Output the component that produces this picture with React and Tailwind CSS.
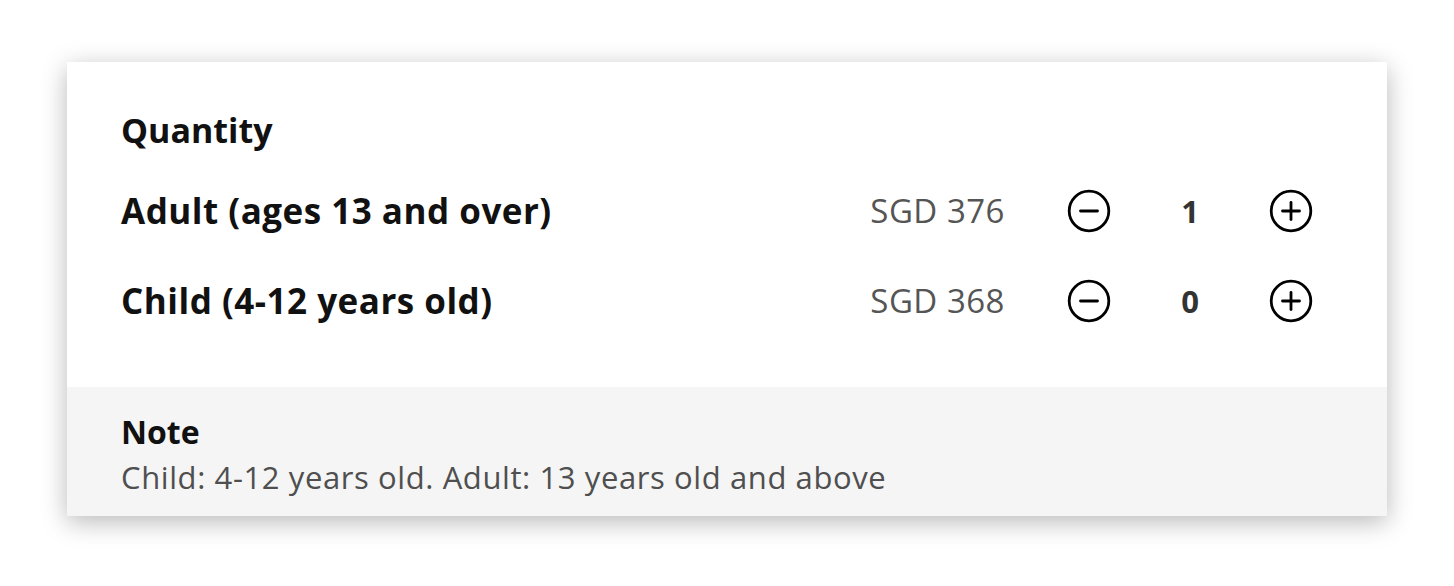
import { useState } from 'react';

const font = { fontFamily: '"Open Sans", "Noto Sans", sans-serif' };

function CircleBtn({ plus, onClick }) {
  return (
    <button onClick={onClick} className="w-[44px] h-[44px] flex items-center justify-center text-black">
      <svg width="44" height="44" viewBox="0 0 44 44" fill="none" stroke="currentColor" strokeWidth="2.8" strokeLinecap="round">
        <circle cx="22" cy="22" r="19.8" />
        <line x1="13.5" y1="22" x2="30.5" y2="22" />
        {plus && <line x1="22" y1="13.5" x2="22" y2="30.5" />}
      </svg>
    </button>
  );
}

function Row({ label, price, count, setCount }) {
  return (
    <div className="flex items-center h-[90px]">
      <div className="flex-1 text-[35px] font-bold text-[#111] tracking-[0.5px]">{label}</div>
      <div className="text-[33px] text-[#555] mr-[62px] tracking-[0.5px]">{price}</div>
      <CircleBtn onClick={() => setCount(Math.max(0, count - 1))} />
      <div className="w-[158px] text-center text-[31px] font-bold text-[#333]">{count}</div>
      <CircleBtn plus onClick={() => setCount(count + 1)} />
    </div>
  );
}

export default function App() {
  const [adult, setAdult] = useState(1);
  const [child, setChild] = useState(0);

  return (
    <div className="bg-white min-h-[586px] pt-[62px] px-[67px]" style={font}>
      <div className="bg-white shadow-[0_6px_24px_rgba(0,0,0,0.28)]">
        <div className="pl-[54px] pr-[74px] pt-[42px] pb-[41px]">
          <h2 className="text-[34px] font-bold text-[#111] leading-[52px] mb-[10px]">Quantity</h2>
          <Row label="Adult (ages 13 and over)" price="SGD 376" count={adult} setCount={setAdult} />
          <Row label="Child (4-12 years old)" price="SGD 368" count={child} setCount={setChild} />
        </div>
        <div className="bg-[#f5f5f5] pl-[54px] pt-[22px] pb-[17px]">
          <div className="text-[32px] font-bold text-[#111] leading-[46px]">Note</div>
          <div className="text-[31px] text-[#4f4f4f] leading-[44px] tracking-[0.6px]">Child: 4-12 years old. Adult: 13 years old and above</div>
        </div>
      </div>
    </div>
  );
}
